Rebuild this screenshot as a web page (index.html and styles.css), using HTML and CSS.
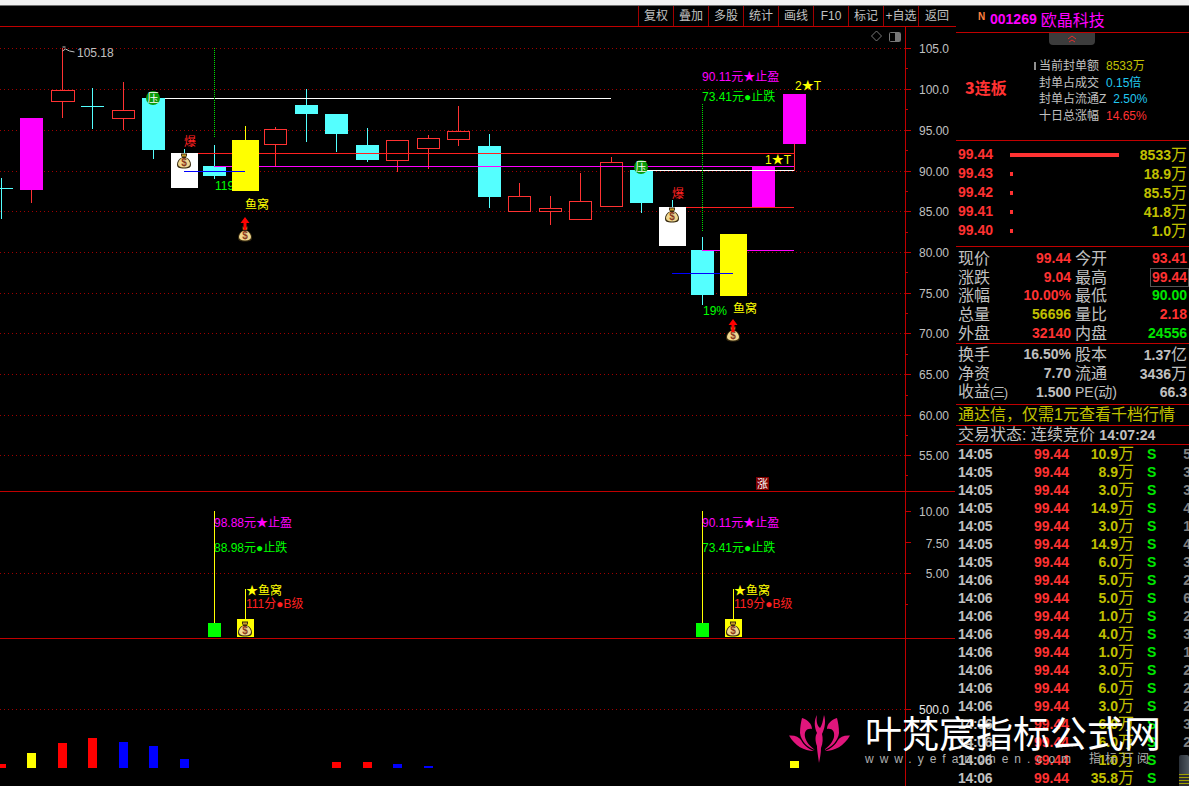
FILE: index.html
```html
<!DOCTYPE html>
<html lang="zh">
<head>
  <meta charset="UTF-8" />
  <title>001269 欧晶科技</title>
  <link rel="stylesheet" href="styles.css">
</head>
<body>
  <div class="strip"></div>

  <div class="app">
    <div class="chart">
      <div class="toolbar">
        <button>复权</button><button>叠加</button><button>多股</button><button>统计</button><button>画线</button><button>F10</button><button>标记</button><button>+自选</button><button>返回</button>
      </div>

      <svg class="plot" width="955" height="759" viewBox="0 27 955 759">
        <defs>
          <symbol id="bag" viewBox="0 0 14 16">
            <path d="M4 .5h6v2l-1 2c3 1 5 4 5 7 0 3-2 4-7 4s-7-1-7-4c0-3 2-6 5-7l-1-2z" fill="#3a2c10"/>
            <path d="M5 1.500h4v2H5z" fill="#c89a28"/>
            <path d="M5 5c-2 1-4 3.500-4 6 0 2 2 3.500 6 3.500s6-1.500 6-3.500c0-2.500-2-5-4-6z" fill="#f0d890"/>
            <text class="bag-s" x="7" y="13">$</text>
          </symbol>
          <symbol id="press" viewBox="0 0 14 14">
            <circle cx="7" cy="7" r="7" fill="#0a9a0a"/>
            <text class="press-t" x="7" y="11">压</text>
          </symbol>
          <symbol id="up" viewBox="0 0 10 13">
            <path d="M5 0l4.500 6H6.500v7h-3V6H.5z" fill="#ff0000"/>
          </symbol>
        </defs>

        <!-- grid -->
        <path class="grid" d="M0 48.500H905M0 89.500H905M0 130.500H905M0 171.500H905M0 211.500H905M0 252.500H905M0 293.500H905M0 333.500H905M0 374.500H905M0 415.500H905M0 455.500H905M0 573.500H905M0 709.500H905"/>
        <path class="frame" d="M905.500 27V786M955.500 27V786M0 491.500H955M0 638.500H955"/>
        <path class="frame" d="M905 48.500h6M905 89.500h6M905 130.500h6M905 171.500h6M905 211.500h6M905 252.500h6M905 293.500h6M905 333.500h6M905 374.500h6M905 415.500h6M905 455.500h6M905 68.500h3M905 109.500h3M905 150.500h3M905 191.500h3M905 232.500h3M905 272.500h3M905 313.500h3M905 354.500h3M905 395.500h3M905 435.500h3M905 475.500h3M905 511.500h6M905 542.500h6M905 573.500h6M905 604.500h3M905 709.500h6"/>

        <!-- candles, first layer -->
        <path class="w-cy" d="M1.500 178V219M0 188.500H13M92.500 88V129M81 106.500H104M153.500 150V159M214.500 145V179M306.500 89V142M336.500 134V152M367.500 128V162M489.500 134V208M641.500 203V213M702.500 237V305"/>
        <path class="w-rd" d="M31.500 190V203M62.500 48V118M123.500 82V130M275.500 127V166M397.500 160V172M428.500 135V169M458.500 106V146M519.500 183V196M550.500 196V225M580.500 173V201M611.500 157V162M794.500 144V171"/>
        <path class="w-ye" d="M245.500 126V140"/>
        <g class="hollow">
          <rect x="51.500" y="90.500" width="23" height="11"/>
          <rect x="112.500" y="110.500" width="22" height="8"/>
          <rect x="264.500" y="129.500" width="22" height="15"/>
          <rect x="386.500" y="140.500" width="22" height="20"/>
          <rect x="417.500" y="138.500" width="22" height="10"/>
          <rect x="447.500" y="131.500" width="22" height="8"/>
          <rect x="508.500" y="196.500" width="22" height="15"/>
          <rect x="539.500" y="208.500" width="22" height="3"/>
          <rect x="569.500" y="201.500" width="22" height="18"/>
          <rect x="600.500" y="162.500" width="22" height="44"/>
        </g>
        <g class="cyan">
          <rect x="142" y="98" width="23" height="52"/>
          <rect x="203" y="166" width="23" height="10"/>
          <rect x="295" y="105" width="23" height="9"/>
          <rect x="325" y="114" width="23" height="20"/>
          <rect x="356" y="145" width="23" height="15"/>
          <rect x="478" y="146" width="23" height="51"/>
          <rect x="630" y="170" width="23" height="33"/>
          <rect x="691" y="250" width="23" height="45"/>
        </g>
        <g class="magenta">
          <rect x="20" y="118" width="23" height="72"/>
          <rect x="752" y="166" width="23" height="41"/>
          <rect x="783" y="94" width="23" height="50"/>
        </g>

        <!-- support and resistance lines -->
        <path class="l-wh" d="M165 98.500H611M641 170.500H794"/>
        <path class="l-rd" d="M198 153.500H795M686 207.500H794"/>
        <path class="l-mg" d="M214 166.500H794M702 250.500H794"/>

        <text class="t green" x="215" y="190">119</text>
        <g class="white">
          <rect x="171" y="153" width="27" height="35"/>
          <rect x="659" y="207" width="27" height="39"/>
        </g>
        <path class="w-cy" d="M184.500 149V153M672.500 200V207"/>
        <g class="yellow">
          <rect x="232" y="140" width="27" height="51"/>
          <rect x="720" y="234" width="27" height="62"/>
        </g>
        <path class="l-bl" d="M184 171.500H245M672 273.500H733"/>
        <path class="dots" d="M214.500 48V138M702.500 104V231"/>

        <!-- marks -->
        <use href="#press" x="146" y="91" width="14" height="14"/>
        <use href="#press" x="634" y="160" width="14" height="14"/>
        <use href="#bag" x="177" y="153" width="14" height="16"/>
        <use href="#bag" x="665" y="207" width="14" height="16"/>
        <use href="#bag" x="238" y="226" width="14" height="16"/>
        <use href="#bag" x="726" y="326" width="14" height="16"/>
        <use href="#up" x="240" y="217" width="10" height="13"/>
        <use href="#up" x="728" y="319" width="10" height="13"/>

        <path class="flag" d="M62.500 47h3M62.500 51l3-2 4 2 5 1"/>
        <text class="t gray" x="77" y="57">105.18</text>
        <text class="t red" x="184" y="146">爆</text>
        <text class="t red" x="672" y="198">爆</text>
        <text class="t yel" x="245" y="209">鱼窝</text>
        <text class="t yel" x="733" y="313">鱼窝</text>
        <text class="t green" x="703" y="315">19%</text>
        <text class="t mag" x="702" y="81">90.11元★止盈</text>
        <text class="t green" x="702" y="101">73.41元●止跌</text>
        <text class="t yel" x="765" y="164">1★T</text>
        <text class="t yel" x="795" y="90">2★T</text>

        <!-- corner icons -->
        <path class="diamond" d="M876.500 31l5 5-5 5-5-5z"/>
        <rect class="pane-i" x="889.500" y="32.500" width="11" height="9" rx="1"/>
        <rect class="pane-f" x="895" y="33" width="5" height="8"/>

        <!-- axis labels -->
        <g class="axis">
          <text x="949" y="53">105.0</text>
          <text x="949" y="94">100.0</text>
          <text x="949" y="135">95.00</text>
          <text x="949" y="176">90.00</text>
          <text x="949" y="216">85.00</text>
          <text x="949" y="257">80.00</text>
          <text x="949" y="298">75.00</text>
          <text x="949" y="338">70.00</text>
          <text x="949" y="379">65.00</text>
          <text x="949" y="420">60.00</text>
          <text x="949" y="460">55.00</text>
          <text x="949" y="516">10.00</text>
          <text x="949" y="548">7.50</text>
          <text x="949" y="578">5.00</text>
          <text class="bright" x="949" y="714">500.0</text>
        </g>

        <rect class="limit" x="756" y="477" width="13" height="13"/>
        <text class="limit-t" x="762.500" y="488">涨</text>

        <!-- signal panel -->
        <path class="w-ye" d="M214.500 511V623M702.500 511V623M245.500 589V620M733.500 589V620"/>
        <rect class="lime" x="208" y="623" width="13" height="14"/>
        <rect class="lime" x="696" y="623" width="13" height="14"/>
        <rect class="yellow-f" x="237" y="619" width="17" height="18"/>
        <rect class="yellow-f" x="725" y="619" width="17" height="18"/>
        <use href="#bag" x="238" y="621" width="14" height="16"/>
        <use href="#bag" x="726" y="621" width="14" height="16"/>
        <text class="t mag" x="214" y="527">98.88元★止盈</text>
        <text class="t green" x="214" y="552">88.98元●止跌</text>
        <text class="t yel" x="246" y="595">★鱼窝</text>
        <text class="t red" x="246" y="608">111分●B级</text>
        <text class="t mag" x="702" y="527">90.11元★止盈</text>
        <text class="t green" x="702" y="552">73.41元●止跌</text>
        <text class="t yel" x="734" y="595">★鱼窝</text>
        <text class="t red" x="734" y="608">119分●B级</text>

        <!-- volume -->
        <g class="bars">
          <rect class="b-r" x="0" y="764" width="6" height="4"/>
          <rect class="b-y" x="27" y="753" width="9" height="15"/>
          <rect class="b-r" x="58" y="743" width="9" height="25"/>
          <rect class="b-r" x="88" y="738" width="9" height="30"/>
          <rect class="b-b" x="119" y="742" width="9" height="26"/>
          <rect class="b-b" x="149" y="746" width="9" height="22"/>
          <rect class="b-b" x="180" y="759" width="9" height="9"/>
          <rect class="b-r" x="332" y="762" width="9" height="6"/>
          <rect class="b-r" x="363" y="762" width="9" height="6"/>
          <rect class="b-b" x="393" y="764" width="9" height="4"/>
          <rect class="b-b" x="424" y="766" width="9" height="2"/>
          <rect class="b-y" x="790" y="761" width="9" height="7"/>
        </g>
      </svg>
    </div>

    <aside class="side">
      <div class="title">
        <span class="new">N</span>
        <span class="code">001269</span>
        <span class="name">欧晶科技</span>
      </div>

      <div class="info">
        <div class="tab">
          <svg width="12" height="8" viewBox="0 0 12 8"><path d="M2 4l4-3 4 3M3 7l3-2 3 2" fill="none" stroke="#e03030"/></svg>
        </div>
        <div class="info-body">
          <div class="board"><b>3</b>连板</div>
          <div class="figures">
            <div><i class="mark"></i>当前封单额<span class="olive">8533万</span></div>
            <div>封单占成交<span class="sky">0.15倍</span></div>
            <div>封单占流通Z<span class="sky">2.50%</span></div>
            <div>十日总涨幅<span class="rise">14.65%</span></div>
          </div>
        </div>
      </div>

      <div class="orders">
        <div class="order"><span class="rise">99.44</span><span class="bar-wrap"><i class="bar" style="width:109px"></i></span><span class="amount">8533<em>万</em></span></div>
        <div class="order"><span class="rise">99.43</span><span class="bar-wrap"><i class="bar" style="width:3px"></i></span><span class="amount">18.9<em>万</em></span></div>
        <div class="order"><span class="rise">99.42</span><span class="bar-wrap"><i class="bar" style="width:3px"></i></span><span class="amount">85.5<em>万</em></span></div>
        <div class="order"><span class="rise">99.41</span><span class="bar-wrap"><i class="bar" style="width:3px"></i></span><span class="amount">41.8<em>万</em></span></div>
        <div class="order"><span class="rise">99.40</span><span class="bar-wrap"><i class="bar" style="width:3px"></i></span><span class="amount">1.0<em>万</em></span></div>
      </div>

      <div class="stats first">
        <div class="pair"><label>现价</label><b class="rise">99.44</b></div>
        <div class="pair"><label>今开</label><b class="rise">93.41</b></div>
        <div class="pair"><label>涨跌</label><b class="rise">9.04</b></div>
        <div class="pair"><label>最高</label><b class="rise boxed">99.44</b></div>
        <div class="pair"><label>涨幅</label><b class="rise">10.00%</b></div>
        <div class="pair"><label>最低</label><b class="fall">90.00</b></div>
        <div class="pair"><label>总量</label><b class="olive">56696</b></div>
        <div class="pair"><label>量比</label><b class="rise">2.18</b></div>
        <div class="pair"><label>外盘</label><b class="rise">32140</b></div>
        <div class="pair"><label>内盘</label><b class="fall">24556</b></div>
      </div>

      <div class="stats second">
        <div class="pair"><label>换手</label><b>16.50%</b></div>
        <div class="pair"><label>股本</label><b>1.37<em>亿</em></b></div>
        <div class="pair"><label>净资</label><b>7.70</b></div>
        <div class="pair"><label>流通</label><b>3436<em>万</em></b></div>
        <div class="pair"><label>收益<small>(三)</small></label><b>1.500</b></div>
        <div class="pair"><label class="pe">PE(动)</label><b>66.3</b></div>
      </div>

      <div class="promo">通达信，仅需1元查看千档行情</div>
      <div class="status">交易状态: 连续竞价 <b>14:07:24</b></div>

      <div class="trades">
        <div class="trade"><b class="time">14:05</b><b class="rise">99.44</b><b class="vol">10.9<em>万</em></b><b class="fall">S</b><b class="n">5</b></div>
        <div class="trade"><b class="time">14:05</b><b class="rise">99.44</b><b class="vol">8.9<em>万</em></b><b class="fall">S</b><b class="n">3</b></div>
        <div class="trade"><b class="time">14:05</b><b class="rise">99.44</b><b class="vol">3.0<em>万</em></b><b class="fall">S</b><b class="n">3</b></div>
        <div class="trade"><b class="time">14:05</b><b class="rise">99.44</b><b class="vol">14.9<em>万</em></b><b class="fall">S</b><b class="n">4</b></div>
        <div class="trade"><b class="time">14:05</b><b class="rise">99.44</b><b class="vol">3.0<em>万</em></b><b class="fall">S</b><b class="n">1</b></div>
        <div class="trade"><b class="time">14:05</b><b class="rise">99.44</b><b class="vol">14.9<em>万</em></b><b class="fall">S</b><b class="n">4</b></div>
        <div class="trade"><b class="time">14:05</b><b class="rise">99.44</b><b class="vol">6.0<em>万</em></b><b class="fall">S</b><b class="n">3</b></div>
        <div class="trade"><b class="time">14:06</b><b class="rise">99.44</b><b class="vol">5.0<em>万</em></b><b class="fall">S</b><b class="n">2</b></div>
        <div class="trade"><b class="time">14:06</b><b class="rise">99.44</b><b class="vol">5.0<em>万</em></b><b class="fall">S</b><b class="n">6</b></div>
        <div class="trade"><b class="time">14:06</b><b class="rise">99.44</b><b class="vol">1.0<em>万</em></b><b class="fall">S</b><b class="n">2</b></div>
        <div class="trade"><b class="time">14:06</b><b class="rise">99.44</b><b class="vol">4.0<em>万</em></b><b class="fall">S</b><b class="n">3</b></div>
        <div class="trade"><b class="time">14:06</b><b class="rise">99.44</b><b class="vol">1.0<em>万</em></b><b class="fall">S</b><b class="n">1</b></div>
        <div class="trade"><b class="time">14:06</b><b class="rise">99.44</b><b class="vol">3.0<em>万</em></b><b class="fall">S</b><b class="n">2</b></div>
        <div class="trade"><b class="time">14:06</b><b class="rise">99.44</b><b class="vol">6.0<em>万</em></b><b class="fall">S</b><b class="n">2</b></div>
        <div class="trade"><b class="time">14:06</b><b class="rise">99.44</b><b class="vol">3.0<em>万</em></b><b class="fall">S</b><b class="n">2</b></div>
        <div class="trade"><b class="time">14:06</b><b class="rise">99.44</b><b class="vol">6.0<em>万</em></b><b class="fall">S</b><b class="n">3</b></div>
        <div class="trade"><b class="time">14:06</b><b class="rise">99.44</b><b class="vol">6.0<em>万</em></b><b class="fall">S</b><b class="n">2</b></div>
        <div class="trade"><b class="time">14:06</b><b class="rise">99.44</b><b class="vol">1.0<em>万</em></b><b class="fall">S</b><b class="n"></b></div>
        <div class="trade"><b class="time">14:06</b><b class="rise">99.44</b><b class="vol">35.8<em>万</em></b><b class="fall">S</b><b class="n"></b></div>
      </div>
    </aside>
  </div>

  <div class="scroll-nub"></div>

  <div class="watermark">
    <svg width="70" height="65" viewBox="0 0 70 65">
      <g fill="#e0167c">
        <path d="M17 13c6 2 10 6 10 11-5-1-8 2-7 8 1 5 5 9 10 13-8-3-14-9-15-17 0-6 1-11 2-15z"/>
        <path d="M4 30.500c6-.5 10 1.500 12 4.500 2 4 7 9 13 11-10 0-19-5-25-15.500z"/>
        <g transform="translate(69 0) scale(-1 1)">
          <path d="M17 13c6 2 10 6 10 11-5-1-8 2-7 8 1 5 5 9 10 13-8-3-14-9-15-17 0-6 1-11 2-15z"/>
          <path d="M4 30.500c6-.5 10 1.500 12 4.500 2 4 7 9 13 11-10 0-19-5-25-15.500z"/>
        </g>
        <path d="M34 58c-1-8-2-13-2-17-2-5-2-10 0-13-3-6-3-13 0-18-1 6 0 11 3 13 2-2 3-8 4-13 2 6 1 13-2 19 1 4 1 9-1 14 0 5-1 10-2 15z"/>
      </g>
    </svg>
    <div class="brand">
      <div class="brand-name">叶梵宸指标公式网</div>
      <div class="brand-sub"><span>www.yefanchen.com</span><span class="brand-tag">指标订阅</span></div>
    </div>
  </div>
</body>
</html>
```

FILE: styles.css
```css
* {
  box-sizing: border-box;
}
html, body {
  margin: 0;
  height: 100%;
  overflow: hidden;
  background: #000;
}
body {
  width: 1189px;
  height: 786px;
  position: relative;
  font-family: "Liberation Sans", "Noto Sans CJK SC", sans-serif;
  color: #c0c0c0;
}
em {
  font-style: normal;
  font-weight: normal;
  font-size: 16px;
}

.strip {
  height: 6px;
  background: #f0f0f0;
  border-bottom: 1px solid #707070;
}
.app {
  display: flex;
  height: 780px;
}

/* chart side */
.chart {
  width: 956px;
  flex: none;
}
.toolbar {
  height: 21px;
  padding-right: 1px;
  display: flex;
  justify-content: flex-end;
  border-bottom: 1px solid #c00000;
}
.toolbar button {
  width: 35px;
  height: 20px;
  padding: 0;
  background: #000;
  border: 0;
  border-left: 1px solid #a00000;
  color: #c0c0c0;
  font: 12px/20px "Liberation Sans", "Noto Sans CJK SC", sans-serif;
  white-space: nowrap;
}
.toolbar button:last-child {
  width: 37px;
}
.plot {
  display: block;
}

.grid { fill: none; stroke: #a00000; stroke-dasharray: 1 3; }
.frame { fill: none; stroke: #c00000; }
.w-cy { fill: none; stroke: #54ffff; }
.w-rd { fill: none; stroke: #ff3232; }
.w-ye { fill: none; stroke: #ffff00; }
.l-wh { fill: none; stroke: #fff; }
.l-rd { fill: none; stroke: #ff2020; }
.l-mg { fill: none; stroke: #ff00ff; }
.l-bl { fill: none; stroke: #0000ff; }
.dots { fill: none; stroke: #00e000; stroke-dasharray: 1 1; }
.flag { fill: none; stroke: #c0c0c0; }
.hollow rect { fill: #000; stroke: #ff3232; }
.cyan rect { fill: #54ffff; }
.magenta rect { fill: #ff00ff; }
.white rect { fill: #fff; }
.yellow rect, .yellow-f { fill: #ffff00; }
.lime { fill: #00ff00; }
.diamond { fill: none; stroke: #777; }
.pane-i { fill: none; stroke: #777; }
.pane-f { fill: #777; }
.limit { fill: #800000; }
.limit-t {
  fill: #fff;
  font: 11px "Noto Sans CJK SC", sans-serif;
  text-anchor: middle;
}
.b-r { fill: #ff0000; }
.b-y { fill: #ffff00; }
.b-b { fill: #0000ff; }

.t { font: 12px "Liberation Sans", "Noto Sans CJK SC", sans-serif; }
.t.gray { fill: #c0c0c0; }
.t.red { fill: #ff2020; }
.t.yel { fill: #ffff00; }
.t.green { fill: #00ff00; }
.t.mag { fill: #ff00ff; }
.axis text {
  font: 12px "Liberation Sans", sans-serif;
  fill: #c0c0c0;
  text-anchor: end;
}
.axis .bright { fill: #e8e8e8; }
.bag-s {
  fill: #8a3a20;
  font: bold 10px "Liberation Sans", sans-serif;
  text-anchor: middle;
}
.press-t {
  fill: #fff;
  font: 11px "Noto Sans CJK SC", sans-serif;
  text-anchor: middle;
}

/* right panel */
.side {
  width: 233px;
  flex: none;
  font-size: 14px;
}
.title {
  height: 27px;
  padding-left: 22px;
  display: flex;
  align-items: center;
  border-bottom: 1px solid #c00000;
  color: #ff00ff;
}
.new {
  width: 12px;
  margin-top: -6px;
  color: #ff8040;
  font: bold 10px "Liberation Sans", sans-serif;
}
.code {
  font-weight: bold;
  margin-right: 4px;
}
.name {
  font-size: 16px;
  font-family: "Noto Sans CJK SC", sans-serif;
}

.info {
  height: 108px;
  border-bottom: 1px solid #c00000;
}
.tab {
  width: 46px;
  height: 12px;
  margin-left: 93px;
  display: flex;
  justify-content: center;
  align-items: center;
  background: #3c3c3c;
  border-radius: 0 0 4px 4px;
}
.tab svg {
  display: block;
}
.info-body {
  display: flex;
  padding-top: 13px;
}
.board {
  width: 83px;
  padding-left: 9px;
  align-self: center;
  margin-top: -9px;
  color: #ff3232;
  font: bold 16px/20px "Noto Sans CJK SC", sans-serif;
}
.figures {
  font-size: 12px;
  line-height: 16.5px;
  white-space: nowrap;
}
.figures span {
  margin-left: 7px;
}
.mark {
  display: inline-block;
  width: 2px;
  height: 8px;
  margin: 0 3px 0 -5px;
  background: #909090;
}
.olive { color: #c0c000; }
.sky { color: #20c8f0; }
.rise { color: #ff3232; }
.fall { color: #00e600; }

.orders {
  height: 106px;
  padding: 4px 2px 0;
  border-bottom: 1px solid #c00000;
}
.order {
  height: 19px;
  display: flex;
  align-items: center;
  font-weight: bold;
  line-height: 19px;
}
.bar-wrap {
  margin-left: 17px;
  display: flex;
}
.bar {
  display: block;
  height: 4px;
  background: #ff3232;
}
.amount {
  margin-left: auto;
  color: #c0c000;
}

.stats {
  display: grid;
  grid-template-columns: 113px 112px;
  column-gap: 4px;
  padding: 0 2px;
  border-bottom: 1px solid #c00000;
}
.stats.first {
  height: 97px;
  padding-top: 2px;
  grid-auto-rows: 18.75px;
}
.stats.second {
  height: 61px;
  padding-top: 1px;
  grid-auto-rows: 19px;
}
.pair {
  display: flex;
  justify-content: space-between;
  align-items: center;
  white-space: nowrap;
}
.pair label {
  font-size: 16px;
  line-height: 17px;
}
.pair label small {
  font-size: 12px;
  letter-spacing: -1px;
}
.pair label.pe {
  font-size: 14px;
}
.pair b {
  line-height: 17px;
}
.boxed {
  outline: 1px solid #555;
  outline-offset: 0;
  padding: 0 1px;
  margin-right: -1px;
}

.promo {
  height: 21px;
  padding-left: 2px;
  border-bottom: 1px solid #c00000;
  color: #c0c000;
  font-size: 16px;
  line-height: 20px;
  white-space: nowrap;
}
.status {
  height: 19px;
  padding-left: 2px;
  border-bottom: 1px solid #c00000;
  font-size: 16px;
  line-height: 18px;
  white-space: nowrap;
}
.status b {
  font-size: 14px;
}

.trade {
  height: 18px;
  padding: 0 2px;
  display: grid;
  grid-template-columns: 76px 36px 64px 13px 26px 18px;
  align-items: center;
  line-height: 18px;
  white-space: nowrap;
}
.trade .time {
  grid-column: 1;
  letter-spacing: -.3px;
}
.trade .rise {
  grid-column: 2;
}
.trade .vol {
  grid-column: 3;
  text-align: right;
  color: #c0c000;
}
.trade .fall {
  grid-column: 5;
}
.trade .n {
  grid-column: 6;
  text-align: right;
  color: #808080;
}

.scroll-nub {
  position: absolute;
  left: 1179px;
  top: 755px;
  width: 10px;
  height: 31px;
  background: repeating-linear-gradient(#a0a000 0 1px, #303030 1px 3px) 0 19px no-repeat, linear-gradient(90deg, #2a3038, #505860);
  border-radius: 2px 2px 0 0;
}

.watermark {
  position: absolute;
  left: 785px;
  top: 705px;
  display: flex;
  gap: 10px;
}
.watermark svg {
  display: block;
  flex: none;
}
.brand {
  padding-top: 8px;
}
.brand-name {
  width: 300px;
  color: #fff;
  font: 37px/38px "Noto Sans CJK SC", sans-serif;
  white-space: nowrap;
}
.brand-sub {
  display: flex;
  margin-top: 1px;
  color: #b0b0b0;
  font-size: 12px;
  line-height: 14px;
  letter-spacing: 6px;
  white-space: nowrap;
}
.brand-tag {
  margin-left: 12px;
  letter-spacing: 4px;
}
```
